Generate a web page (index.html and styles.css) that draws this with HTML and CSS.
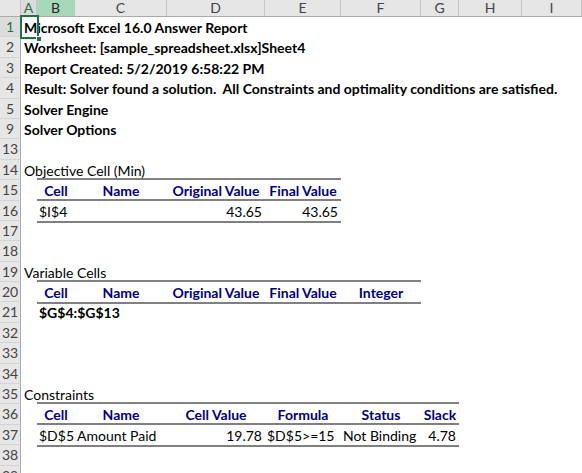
FILE: index.html
```html
<!DOCTYPE html>
<html>
<head>
<meta charset="utf-8">
<link rel="stylesheet" href="styles.css">
</head>
<body>
<div class="sheet">
  <div class="colhdr">
    <div class="corner"></div>
    <div class="ch ch-act">A</div>
    <div class="ch ch-sel">B</div>
    <div class="ch">C</div>
    <div class="ch">D</div>
    <div class="ch">E</div>
    <div class="ch">F</div>
    <div class="ch">G</div>
    <div class="ch">H</div>
    <div class="ch">I</div>
  </div>

  <div class="row">
    <div class="rh rh-act">1</div>
    <div class="title">Microsoft Excel 16.0 Answer Report</div>
    <div class="selhost"><div class="sel"><span class="handle"></span></div></div>
  </div>
  <div class="row"><div class="rh">2</div><div class="title">Worksheet: [sample_spreadsheet.xlsx]Sheet4</div></div>
  <div class="row"><div class="rh">3</div><div class="title">Report Created: 5/2/2019 6:58:22 PM</div></div>
  <div class="row"><div class="rh">4</div><div class="title">Result: Solver found a solution.  All Constraints and optimality conditions are satisfied.</div></div>
  <div class="row"><div class="rh">5</div><div class="title">Solver Engine</div></div>
  <div class="row"><div class="rh">9</div><div class="title">Solver Options</div></div>
  <div class="row"><div class="rh">13</div></div>
  <div class="row"><div class="rh">14</div><div class="section">Objective Cell (Min)</div></div>
  <div class="row">
    <div class="rh">15</div>
    <div class="tbl t4 thead">
      <div class="th">Cell</div><div class="th">Name</div><div class="th">Original Value</div><div class="th">Final Value</div>
    </div>
  </div>
  <div class="row">
    <div class="rh">16</div>
    <div class="tbl t4 tdata">
      <div class="td">$I$4</div><div class="td"></div><div class="td num">43.65</div><div class="td num">43.65</div>
    </div>
  </div>
  <div class="row"><div class="rh">17</div></div>
  <div class="row"><div class="rh">18</div></div>
  <div class="row"><div class="rh">19</div><div class="section">Variable Cells</div></div>
  <div class="row">
    <div class="rh">20</div>
    <div class="tbl t5 thead closed">
      <div class="th">Cell</div><div class="th">Name</div><div class="th">Original Value</div><div class="th">Final Value</div><div class="th">Integer</div>
    </div>
  </div>
  <div class="row"><div class="rh">21</div><div class="varref">$G$4:$G$13</div></div>
  <div class="row"><div class="rh">32</div></div>
  <div class="row"><div class="rh">33</div></div>
  <div class="row"><div class="rh">34</div></div>
  <div class="row"><div class="rh">35</div><div class="section">Constraints</div></div>
  <div class="row">
    <div class="rh">36</div>
    <div class="tbl t6 thead">
      <div class="th">Cell</div><div class="th">Name</div><div class="th">Cell Value</div><div class="th">Formula</div><div class="th">Status</div><div class="th">Slack</div>
    </div>
  </div>
  <div class="row">
    <div class="rh">37</div>
    <div class="tbl t6 tdata">
      <div class="td">$D$5</div><div class="td">Amount Paid</div><div class="td num">19.78</div><div class="td">$D$5&gt;=15</div><div class="td">Not Binding</div><div class="td num">4.78</div>
    </div>
  </div>
  <div class="row"><div class="rh">38</div></div>
  <div class="row"><div class="rh">39</div></div>
</div>
</body>
</html>
```

FILE: styles.css
```css
:root {
  --cols: 21px 16px 38px 92px 98px 76px 80px 38px 63px 60px;
  --rowh: 20.4px;
}

html, body {
  margin: 0;
  padding: 0;
  background: #ffffff;
}

body {
  width: 582px;
  height: 473px;
  overflow: hidden;
  font-family: Lato, "Liberation Sans", sans-serif;
  font-size: 14px;
  color: #000000;
}

.sheet {
  display: flex;
  flex-direction: column;
}

.colhdr {
  display: grid;
  grid-template-columns: var(--cols);
  height: 17px;
  box-sizing: border-box;
  background: #e6e6e6;
  border-bottom: 1px solid #ababab;
}

.corner {
  border-right: 1px solid #c6c6c6;
}

.ch {
  border-right: 1px solid #c6c6c6;
  text-align: center;
  line-height: 16px;
  color: #444444;
  font-size: 14px;
}

.ch-act {
  color: #217346;
  background: #dcdcdc;
}

.ch-sel {
  background: #a6d8b9;
  color: #262626;
}

.row {
  display: grid;
  grid-template-columns: var(--cols);
  grid-template-rows: var(--rowh);
  height: var(--rowh);
}

.rh {
  grid-column: 1;
  grid-row: 1;
  background: #e6e6e6;
  border-right: 1px solid #ababab;
  border-bottom: 1px solid #d4d4d4;
  box-sizing: border-box;
  text-align: center;
  color: #444444;
  font-size: 14px;
  line-height: 20px;
}

.rh-act {
  color: #217346;
  background: #dcdcdc;
}

.title,
.section {
  grid-column: 2 / -1;
  grid-row: 1;
  white-space: pre;
  padding-left: 3px;
  line-height: 21px;
}

.title {
  font-weight: bold;
}

.varref {
  grid-column: 3 / -1;
  grid-row: 1;
  padding-left: 2px;
  font-weight: bold;
  line-height: 21px;
  white-space: pre;
}

.selhost {
  grid-column: 2;
  grid-row: 1;
  position: relative;
}

.sel {
  position: absolute;
  left: -1px;
  top: -2px;
  width: 19px;
  height: 24px;
  box-sizing: border-box;
  border: 2px solid #217346;
}

.handle {
  position: absolute;
  right: -5px;
  bottom: -5px;
  width: 6px;
  height: 6px;
  box-sizing: border-box;
  background: #217346;
  border: 1px solid #ffffff;
}

.tbl {
  grid-row: 1;
  display: grid;
  align-self: stretch;
}

.t4 {
  grid-column: 3 / 7;
  grid-template-columns: 38px 92px 98px 76px;
}

.t5 {
  grid-column: 3 / 8;
  grid-template-columns: 38px 92px 98px 76px 80px;
}

.t6 {
  grid-column: 3 / 9;
  grid-template-columns: 38px 92px 98px 76px 80px 38px;
}

.thead {
  border-top: 2px solid #808080;
  margin-top: -2px;
}

.thead.closed {
  border-bottom: 2px solid #808080;
  margin-bottom: -2px;
}

.tdata {
  border-top: 2px solid #808080;
  border-bottom: 2px solid #808080;
  margin-top: -2px;
  margin-bottom: -2px;
}

.th {
  color: #000080;
  font-weight: bold;
  text-align: center;
  white-space: nowrap;
  line-height: 21px;
}

.td {
  white-space: nowrap;
  padding: 0 2px;
  line-height: 21px;
}

.num {
  text-align: right;
  padding-right: 3px;
}
```
